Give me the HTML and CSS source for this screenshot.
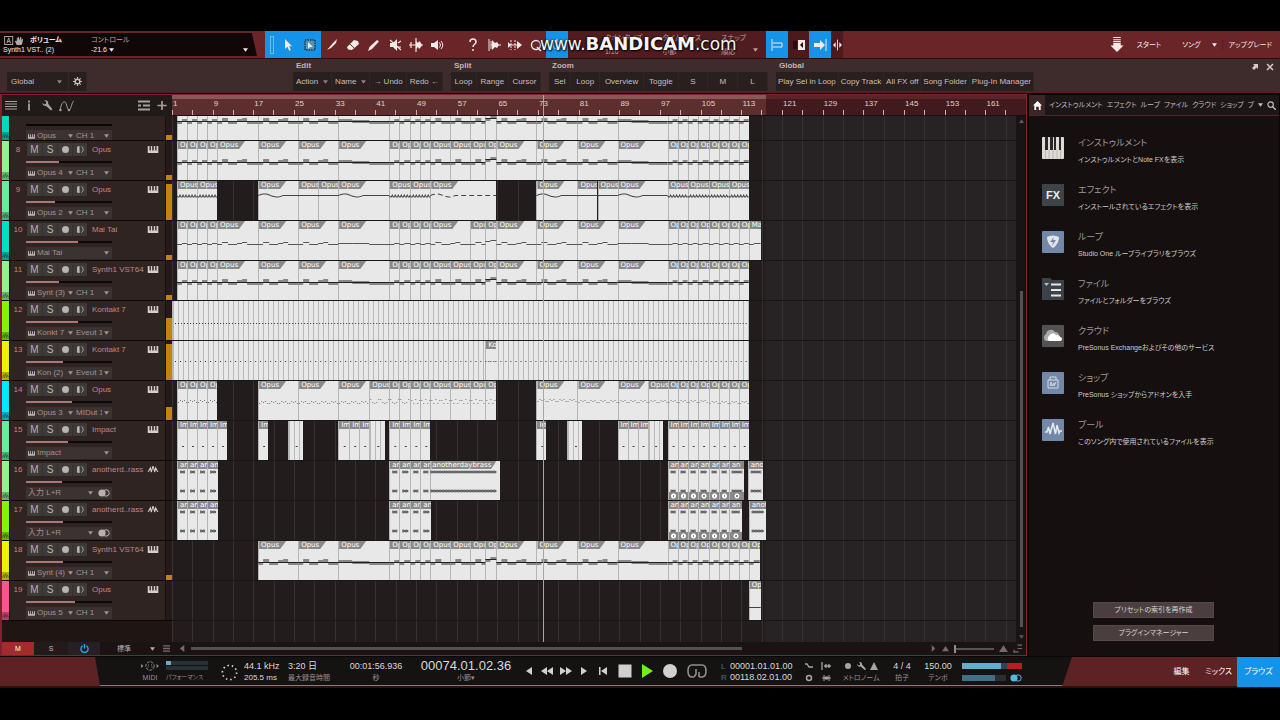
FILE: index.html
```html
<!DOCTYPE html>
<html lang="ja">
<head>
<meta charset="utf-8">
<title>Studio One</title>
<link rel="stylesheet" href="styles.css">
</head>
<body>
<svg class="defs" aria-hidden="true">
  <symbol id="keys" viewBox="0 0 12 8"><path d="M0 0h2v5h1.500V0h1.600v5h1.800V0h1.600v5h1.500V0h2v8H0z"/></symbol>
  <symbol id="wave" viewBox="0 0 12 8"><path d="M0 6h1l2-4 1 5 2-7 2 7 1-5 2 4h1" fill="none" stroke="currentColor" stroke-width="1.2"/></symbol>
  <symbol id="down" viewBox="0 0 6 4"><path d="M0 0h6L3 4z"/></symbol>
  <symbol id="up" viewBox="0 0 8 6"><path d="M0 6h8L4 0z"/></symbol>
  <symbol id="mono" viewBox="0 0 8 8"><path d="M3 0a4 4 0 0 0 0 8z"/><path d="M5 .5a4 4 0 0 1 0 7" fill="none" stroke="currentColor"/></symbol>
  <symbol id="stereo" viewBox="0 0 12 8"><circle cx="4" cy="4" r="3.6"/><circle cx="8" cy="4" r="3.2" fill="none" stroke="currentColor"/></symbol>
  <symbol id="gear" viewBox="0 0 10 10"><circle cx="5" cy="5" r="2.6" fill="none" stroke="currentColor" stroke-width="1.6"/><path d="M5 0v2M5 8v2M0 5h2M8 5h2M1.5 1.5l1.4 1.4M7.1 7.1l1.4 1.4M8.5 1.5L7.100 2.900M1.500 8.500l1.400-1.400" stroke="currentColor" stroke-width="1.300"/></symbol>
  <symbol id="wrench" viewBox="0 0 12 12"><path d="M1 3l2 2 2-1 0-2-2-1.500c3-.8 5 1 4.200 3.500L12 10l-1.500 1.500L5 6.500C3 7.200.8 5.500 1 3z"/></symbol>
</svg>

<header class="topbar">
  <section class="param">
    <svg class="param-a" viewBox="0 0 24 10"><rect x=".5" y=".5" width="9" height="9" fill="none" stroke="currentColor"/><path d="M3 8l2-6 2 6M3.500 6h3" fill="none" stroke="currentColor"/><path d="M14 10l-2-4 1-1 1 1V2h1v3l.5-4h1l.2 4L18 1h1v4l1-2 1 .5-1 5-1 1.500z"/></svg>
    <b>ボリューム</b><span class="param-ctl">コントロール</span>
    <span class="param-name">Synth1 VST.. (2)</span><span class="param-val">-21.6 <svg class="dn"><use href="#down"/></svg></span><svg class="dn param-dn"><use href="#down"/></svg>
  </section>
  <nav class="tools">
    <span class="grip on"></span>
    <button class="on wide" aria-label="Arrow"><svg viewBox="0 0 14 14"><path d="M4 1v10l2.500-2.300 1.700 4 1.600-.7-1.700-3.800H11z"/></svg></button>
    <button class="on wide" aria-label="Range"><svg viewBox="0 0 14 14"><rect x="2" y="2" width="10" height="10" fill="#5592b8" stroke="#19384e" stroke-width="1.500" stroke-dasharray="1.500 1"/><path d="M5 4v7l2-2h3z"/></svg></button>
    <button aria-label="Split"><svg viewBox="0 0 14 14"><path d="M2 12l6-7 4-4-1 4-5 5z"/></svg></button>
    <button aria-label="Eraser"><svg viewBox="0 0 14 14"><path d="M1 9l7-7 4 1 1 3-7 6-4-.5z"/><path d="M4 6l4 4" stroke="#6a2529"/></svg></button>
    <button aria-label="Paint"><svg viewBox="0 0 14 14"><path d="M1 13l1.500-4L10 2l2 1.500L5 11z"/></svg></button>
    <button aria-label="Mute"><svg viewBox="0 0 14 14"><path d="M2 5h3l4-4v12L5 9H2z"/><path d="M2 2l11 10M10 5l3-2M10 9h3" stroke="currentColor" stroke-width="1.200"/></svg></button>
    <button aria-label="Bend"><svg viewBox="0 0 14 14"><path d="M7 0v14M0 7h14M2 4v6" stroke="currentColor" stroke-width="1.200"/><path d="M7 3l2 2 1-2 2 2 1 2-1 2-2 2-1-2-2 2z"/></svg></button>
    <button aria-label="Listen"><svg viewBox="0 0 14 14"><path d="M1 5h3l4-3v10L4 9H1z"/><path d="M9.500 4.500q2 2.500 0 5M11 3q3.500 4 0 8" fill="none" stroke="currentColor"/></svg></button>
    <button class="gap" aria-label="Help"><svg viewBox="0 0 14 14"><path d="M4 4c0-4 6-4 6 0 0 2.500-3 2-3 5" fill="none" stroke="currentColor" stroke-width="1.500"/><circle cx="7" cy="12" r="1"/></svg></button>
    <button aria-label="Strip"><svg viewBox="0 0 14 14"><path d="M2 1v12M4 3v8" stroke="currentColor"/><path d="M4 7h10" stroke="currentColor"/><path d="M5 2l3 3 2-1 2 3-2 3-2-1-3 3z"/></svg></button>
    <button aria-label="Transient"><svg viewBox="0 0 14 14"><path d="M3 2v10M7 2v10" stroke="currentColor" stroke-dasharray="2 1"/><path d="M0 7h12" stroke="currentColor"/><path d="M9 3l5 4-5 4zM0 4l3 3-3 3z"/></svg></button>
    <button aria-label="Quantize"><svg viewBox="0 0 14 14"><circle cx="7" cy="7" r="4.500" fill="none" stroke="currentColor" stroke-width="1.400"/><path d="M8 9l4 4" stroke="currentColor" stroke-width="1.500"/></svg></button>
    <button class="on wide" aria-label="Auto quantize"><svg viewBox="0 0 14 14"><path d="M7 1v12" stroke="currentColor" stroke-dasharray="2 1"/><circle cx="7" cy="7" r="4" fill="none" stroke="currentColor"/></svg></button>
  </nav>
  <section class="grid-opts">
    <span>クオンタイズ<br>1/16</span><span>タイムベース<br>小節</span><span>スナップ<br>順応</span>
    <svg class="dn"><use href="#down"/></svg>
    <strong class="mark"><small>www.</small>BANDICAM<small>.com</small></strong>
  </section>
  <nav class="tools">
    <button class="on wide" aria-label="Snap"><svg viewBox="0 0 14 14"><path d="M2 1v12M3 5h9v4H3" fill="none" stroke="currentColor"/></svg></button>
    <button class="dim" aria-label="Ripple"><svg viewBox="0 0 14 14"><path d="M2 3v8M4 3v8" stroke="#000"/><path d="M6 2h7v10H6z"/><path d="M11 4L8 7l3 3z" fill="#300"/></svg></button>
    <button class="on wide" aria-label="Autoscroll"><svg viewBox="0 0 14 14"><path d="M1 5h6V2l5 5-5 5V9H1z"/><path d="M13 1v12" stroke="currentColor"/></svg></button>
    <button class="thin" aria-label="Cursor"><svg viewBox="0 0 10 14"><path d="M5 1v12" stroke="currentColor"/><path d="M0 7l3-3v6zM10 7L7 4v6z"/></svg></button>
  </nav>
  <nav class="pages">
    <svg class="dl" viewBox="0 0 14 16"><path d="M3 0h8v1H3zM3 2h8v1H3zM3 4h8v1.500H3zM3 6.500h8V9h3l-7 7-7-7h3z"/></svg>
    <button>スタート</button><button>ソング</button><svg class="dn"><use href="#down"/></svg><button>アップグレード</button>
  </nav>
</header>

<section class="macros">
  <div class="group preset"><div class="row">
    <label class="pick"><select aria-label="Macro page"><option>Global</option></select><svg class="dn"><use href="#down"/></svg></label>
    <button aria-label="Settings"><svg class="i9"><use href="#gear"/></svg></button></div></div>
  <div class="group edit"><h2>Edit</h2><div class="row"><button>Action <svg class="dn"><use href="#down"/></svg></button><button>Name <svg class="dn"><use href="#down"/></svg></button><button>→ Undo</button><button>Redo ←</button></div></div>
  <div class="group split"><h2>Split</h2><div class="row"><button>Loop</button><button>Range</button><button>Cursor</button></div></div>
  <div class="group zoom"><h2>Zoom</h2><div class="row"><button>Sel</button><button>Loop</button><button>Overview</button><button>Toggle</button><button>S</button><button>M</button><button>L</button></div></div>
  <div class="group glob"><h2>Global</h2><div class="row"><button>Play Sel in Loop</button><button>Copy Track</button><button>All FX off</button><button>Song Folder</button><button>Plug-In Manager</button></div></div>
  <svg class="close" viewBox="0 0 24 8"><path d="M2 1h5v5L5.500 4.500 3 7 1 5l2.500-2.500z"/><path d="M16 1l6 6M22 1l-6 6" stroke="currentColor" stroke-width="1.500"/></svg>
</section>

<main class="main">
  <section class="arrange">
    <div class="head">
      <div class="head-tools">
        <svg viewBox="0 0 12 10"><path d="M0 1h12M0 3.500h12M0 6h12M0 8.500h12" stroke="currentColor"/></svg>
        <svg viewBox="0 0 12 10"><path d="M6 0v2M6 3v7" stroke="currentColor" stroke-width="1.800"/></svg>
        <svg viewBox="0 0 12 12"><use href="#wrench"/></svg>
        <svg class="curve" viewBox="0 0 16 12"><path d="M1 11C2 4 4 1 6 2s2 8 4 8 3-9 5-9" fill="none" stroke="currentColor"/><circle cx="1.500" cy="10" r="1.200"/><circle cx="10" cy="10" r="1.200"/></svg>
        <i></i>
        <svg viewBox="0 0 12 10"><path d="M0 1h12M0 9h12M0 5h3M5 5h7" stroke="currentColor" stroke-width="1.800"/></svg>
        <svg viewBox="0 0 12 12"><path d="M6 1v10M1 6h10" stroke="currentColor" stroke-width="1.800"/></svg>
      </div>
      <div class="ruler"><div class="loop"></div><div class="bars" id="bars"></div></div>
    </div>
    <div class="body">
      <div class="tracks" id="tracks"></div>
      <div class="lanes" id="lanes"></div>
      <div class="vscroll"><svg class="dn"><use href="#up"/></svg><i></i><svg class="dn"><use href="#down"/></svg></div>
    </div>
    <div class="foot">
      <button class="m">M</button><button class="s">S</button><button class="p" aria-label="Power"><svg class="i9" viewBox="0 0 10 10"><path d="M3 2a4 4 0 1 0 4 0M5 0v5" fill="none" stroke="currentColor" stroke-width="1.500"/></svg></button>
      <label class="pick size"><select aria-label="Track size"><option>標準</option></select><svg class="dn"><use href="#down"/></svg></label>
      <svg class="i7" viewBox="0 0 8 8"><path d="M0 1h8M0 4h8M0 7h8" stroke="currentColor" stroke-width="1.500"/></svg>
      <svg class="i7 left" viewBox="0 0 8 8"><path d="M6 0v8L1 4z"/></svg>
      <div class="hscroll"><i></i></div>
      <svg class="i7" viewBox="0 0 8 8"><path d="M2 0v8l4-4z"/></svg>
      <svg class="i7"><use href="#up"/></svg>
      <input type="range" value="0" aria-label="Zoom">
      <svg class="i9"><use href="#up"/></svg>
      <svg class="i9" viewBox="0 0 8 8"><path d="M4 1h4M4 4h4M1 5v3M1 7h4" stroke="currentColor"/></svg>
    </div>
    <div class="cursor-wrap"><div class="playhead"></div></div>
  </section>

  <aside class="browser">
    <nav class="tabs">
      <button class="home" aria-label="Home"><svg class="i9" viewBox="0 0 10 10"><path d="M5 0l5 5H8.500v5h-2V6.500h-3V10h-2V5H0z"/></svg></button>
      <button>インストゥルメント</button><button>エフェクト</button><button>ループ</button><button>ファイル</button><button>クラウド</button><button>ショップ</button><button>プ</button>
      <svg class="dn"><use href="#down"/></svg><svg class="i9" viewBox="0 0 10 10"><circle cx="4" cy="4" r="3" fill="none" stroke="currentColor" stroke-width="1.300"/><path d="M6 6l4 4" stroke="currentColor" stroke-width="1.500"/></svg>
    </nav>
    <ul class="cats">
      <li><svg viewBox="0 0 22 22"><rect width="22" height="22" rx="1" fill="#dedad6"/><path d="M3 0h3v13H3zM8 0h3v13H8zM12 0h2v13h-2zM17 0h2v13h-2z" fill="#292628"/><path d="M3.500 13v9M7 13v9M11 13v9M15 13v9M18.500 13v9" stroke="#bcb8b5"/></svg><div><h3>インストゥルメント</h3><p>インストゥルメントとNote FXを表示</p></div></li>
      <li><span class="fx">FX</span><div><h3>エフェクト</h3><p>インストールされているエフェクトを表示</p></div></li>
      <li><svg viewBox="0 0 22 22"><rect width="22" height="22" rx="1" fill="#7188a9"/><path d="M5 6q6-3 12 0c0 5-3 9-6 11-3-2-6-6-6-11z" fill="#e2e6ea"/><path d="M12 6l-4 5h3l-1 4 4-6h-3z" fill="#7188a9"/></svg><div><h3>ループ</h3><p>Studio One ループライブラリをブラウズ</p></div></li>
      <li><svg viewBox="0 0 22 22"><path d="M0 0h8l2 2h12v20H0z" fill="#3c4248"/><path d="M2 5h5L4.500 8z" fill="#b3c0c8"/><path d="M9 6.500h10M9 12h10M9 17.500h10" stroke="#e5e8e9" stroke-width="2"/></svg><div><h3>ファイル</h3><p>ファイルとフォルダーをブラウズ</p></div></li>
      <li><svg viewBox="0 0 22 22"><rect width="22" height="22" rx="1" fill="#545253"/><path d="M4 16a4 4 0 0 1 0-7 5 5 0 0 1 9-2 4 4 0 0 1 4 4 3 3 0 0 1 1 5z" fill="#aaa"/><path d="M7 16a3 3 0 0 1 0-5 4 4 0 0 1 7-1 3 3 0 0 1 4 2 2 2 0 0 1 0 4z" fill="#fff"/></svg><div><h3>クラウド</h3><p>PreSonus Exchangeおよびその他のサービス</p></div></li>
      <li><svg viewBox="0 0 22 22"><rect width="22" height="22" rx="1" fill="#7188a9"/><path d="M6 8h10v8H6zM8 8V5h6v3M8 14l1-4 1 4 2-3v3l2-4" fill="none" stroke="#d5dbe3"/></svg><div><h3>ショップ</h3><p>PreSonus ショップからアドオンを入手</p></div></li>
      <li><svg viewBox="0 0 22 22"><rect width="22" height="22" rx="1" fill="#7188a9"/><path d="M3 13h2l1.500-5L8 15l3-11 2.500 11L15 6l2 8 1-2h2" fill="none" stroke="#e6eaee" stroke-width="1.500"/></svg><div><h3>プール</h3><p>このソング内で使用されているファイルを表示</p></div></li>
    </ul>
    <div class="actions"><button>プリセットの索引を再作成</button><button>プラグインマネージャー</button></div>
  </aside>
</main>

<footer class="transport">
  <div class="panel">
    <div class="cell mid"><svg class="midi" viewBox="0 0 18 10"><path d="M0 3l2.500 2L0 7zM15.500 3L18 5l-2.500 2z"/><circle cx="9" cy="5" r="4.200" fill="none" stroke="currentColor" stroke-dasharray="3 1"/><path d="M7 4h1M10 4h1M6.500 6h1M10.500 6h1" stroke="currentColor"/></svg><small>MIDI</small></div>
    <div class="cell perf"><div class="load"></div><div class="load idle"></div><small>パフォーマンス</small></div>
    <div class="cell mid"><svg class="dots" viewBox="0 0 18 18"><circle cx="9" cy="9" r="7.500" fill="none" stroke="currentColor" stroke-width="1.800" stroke-dasharray="1.500 3.200"/></svg></div>
    <div class="cell"><span>44.1 kHz</span><span class="sm">205.5 ms</span></div>
    <div class="cell"><span>3:20 日</span><small>最大録音時間</small></div>
    <div class="cell mid"><span>00:01:56.936</span><small>秒</small></div>
    <div class="cell mid"><span class="pos">00074.01.02.36</span><small>小節▾</small></div>
    <div class="keys">
      <button aria-label="Back"><svg viewBox="0 0 14 14"><path d="M10 3v8L4 7z"/></svg></button>
      <button aria-label="Rewind"><svg viewBox="0 0 14 14"><path d="M7 3v8L1 7zM13 3v8L7 7z"/></svg></button>
      <button aria-label="Forward"><svg viewBox="0 0 14 14"><path d="M1 3v8l6-4zM7 3v8l6-4z"/></svg></button>
      <button aria-label="Next"><svg viewBox="0 0 14 14"><path d="M4 3v8l6-4z"/></svg></button>
      <button aria-label="Return to zero"><svg viewBox="0 0 14 14"><path d="M11 3v8L5 7zM3 3h1.500v8H3z"/></svg></button>
      <button class="big" aria-label="Stop"><svg viewBox="0 0 14 14"><path d="M.5.500h13v13H.5z"/></svg></button>
      <button class="big play" aria-label="Play"><svg viewBox="0 0 14 14"><path d="M2 0v14l11-7z"/></svg></button>
      <button class="big" aria-label="Record"><svg viewBox="0 0 14 14"><circle cx="7" cy="7" r="7"/></svg></button>
      <button class="loopb" aria-label="Loop"><svg viewBox="0 0 22 16"><path d="M8 14H6q-4 0-4-6t4-6h10q4 0 4 6t-4 6h-3M8 14l2-3V6M13 14V9" fill="none" stroke="currentColor" stroke-width="1.600"/></svg></button>
    </div>
    <div class="cell lr"><span><i>L</i>00001.01.01.00</span><span><i>R</i>00118.02.01.00</span></div>
    <div class="cell icons"><svg viewBox="0 0 30 8"><path d="M1 2h2l2 3h4M18 0v8M20 4h7M22 2v4M25 2v4" fill="none" stroke="currentColor" stroke-width="1.300"/></svg><svg viewBox="0 0 30 8"><circle cx="5" cy="4" r="2.500" fill="none" stroke="currentColor" stroke-width="1.500"/><path d="M18 4h9M20 1v6M25 1v6M21 3h3v2h-3z" stroke="currentColor"/></svg></div>
    <div class="cell mid"><svg class="met" viewBox="0 0 34 10"><circle cx="4" cy="5" r="3"/><path d="M13 3l1.500 1.500L16 4l0-1.500L15 1c2-.5 3.500 1 3 2.500L22 8l-1 1.200L16.500 5.500C15 6 13 5 13 3zM30 1l4 8h-8z"/></svg><small>メトロノーム</small></div>
    <div class="cell mid"><span>4 / 4</span><small>拍子</small></div>
    <div class="cell mid"><span>150.00</span><small>テンポ</small></div>
    <div class="cell out"><div class="lvl"></div><div class="lvl two"><i></i><svg class="st"><use href="#stereo"/></svg></div></div>
  </div>
  <nav class="views"><button>編集</button><button>ミックス</button><button class="on">ブラウズ</button></nav>
</footer>
<script src="script.js"></script>
</body>
</html>
```

FILE: styles.css
```css
* { box-sizing: border-box; }
body {
  margin: 0; padding: 31px 0 32px; min-height: 100vh; background: #000; color: #c9bebd;
  display: flex; flex-direction: column; overflow: hidden;
  font: 8px/10px "Liberation Sans", "Noto Sans CJK JP", sans-serif;
  font-feature-settings: "palt";
}
button, select, input { font: inherit; color: inherit; background: none; border: 0; margin: 0; padding: 0; font-feature-settings: inherit; }
button { display: flex; align-items: center; justify-content: center; white-space: nowrap; }
select { appearance: none; min-width: 0; flex: 1; text-overflow: clip; }
svg { fill: currentColor; flex: none; display: block; }
h2, h3, p, ul { margin: 0; padding: 0; font-weight: normal; list-style: none; }
small { font-size: 7px; }
.defs { position: absolute; width: 0; height: 0; }
.dn { width: 5px; height: 4px; }
.i7 { width: 7px; height: 7px; }
.i9 { width: 9px; height: 9px; }
.pick { display: flex; align-items: center; gap: 4px; }

/* Top bar */
.topbar { display: flex; align-items: stretch; height: 28px; background: #6a2529; border-bottom: 1px solid #2b0d0f; color: #f2e9e9; }
.param {
  width: 257px; margin: 2px 8px 2px 0; padding: 2px 8px 2px 3px; background: #120707;
  clip-path: polygon(0 0, 98% 0, 100% 100%, 0 100%);
  display: grid; grid-template-columns: 27px 61px 41px 1fr 6px; align-items: center;
}
.param-a { width: 24px; height: 9px; color: #b5abab; }
.param b { font-weight: bold; font-size: 7px; }
.param-ctl { grid-column: 3 / 6; color: #b3a5a5; font-size: 7px; }
.param-name { grid-column: 1 / 3; font-size: 7px; }
.param-val { display: flex; align-items: center; gap: 2px; font-size: 7px; }
.param-dn { grid-column: 5; }
.tools { display: flex; }
.tools button { width: 21px; }
.tools .wide { width: 22px; }
.tools .thin { width: 12px; background: #4c1a1d; }
.tools .dim { background: #4c1a1d; }
.tools .gap { margin-left: 15px; }
.tools svg { width: 14px; height: 14px; }
.tools .thin svg { width: 9px; }
.on { background: #1493e8; }
.grip { width: 12px; display: flex; align-items: center; padding-left: 5px; }
.grip::before { content: ""; width: 2px; height: 16px; border: 1px solid #6dbdf0; }
.grid-opts { position: relative; width: 198px; background: #501c20; display: flex; gap: 20px; padding: 0 8px 0 37px; color: #bd9d9f; font-size: 7px; line-height: 14px; white-space: nowrap; }
.grid-opts > .dn { position: absolute; right: 8px; bottom: 6px; }
.mark {
  position: absolute; left: -28px; top: 2px; line-height: 22px; white-space: nowrap; color: #f4f4f4;
  font-family: "DejaVu Sans", sans-serif; font-size: 18px; text-shadow: 1px 1px 2px #000, -1px 0 2px #000;
}
.mark small { font-size: 17px; font-weight: normal; }
.pages { margin-left: auto; display: flex; align-items: center; gap: 11px; padding-right: 8px; font-size: 7px; }
.pages .dl { width: 14px; height: 15px; }
.pages .dl + button { margin-left: 2px; }
.pages button + button { margin-left: 10px; }
.pages .dn + button { border-left: 1px solid #541c1f; padding-left: 6px; margin-left: -6px; }

/* Macro toolbar */
.macros { display: flex; align-items: flex-end; gap: 8px; height: 34px; padding: 0 8px 1px 7px; background: #3e2c2c; border-bottom: 1px solid #551c25; }
.group h2 { font-size: 8px; font-weight: bold; line-height: 12px; padding: 0 3px; color: #c2b4b3; }
.row { display: flex; height: 19px; background: #291f1e; }
.row button { flex: 1 1 auto; gap: 5px; border-right: 1px solid #302524; }
.row .dn { color: #91807f; }
.preset { width: 80px; margin-right: 198px; }
.preset .pick { width: 62px; padding: 0 6px 0 4px; border-right: 1px solid #352928; }
.edit { width: 150px; }
.split { width: 90px; }
.zoom { width: 219px; }
.zoom button:nth-child(n+5) { flex-basis: 20px; }
.glob { width: 258px; }
.close { width: 24px; height: 8px; margin: 0 -3px 20px auto; color: #d7caca; }

/* Arranger */
.main { flex: 1; min-height: 0; display: flex; background: #0b0606; padding: 1px 1px 1px 0; }
.arrange { position: relative; flex: 1; min-width: 0; display: flex; flex-direction: column; border: 1px solid #82202f; border-left-width: 2px; margin-right: 2px; background: #191413; }
.head { display: flex; height: 21px; }
.head-tools { width: 170px; background: #201a19; display: flex; align-items: center; gap: 6px; padding: 0 4px 0 3px; color: #a9a09e; }
.head-tools svg { width: 12px; height: 11px; }
.head-tools .curve { width: 16px; height: 12px; }
.head-tools i { flex: 1; }
.ruler { flex: 1; min-width: 0; background: #451c1e; }
.loop { height: 4px; background: linear-gradient(90deg, #8a5757 69.5%, #592327 0); }
.bars { height: 17px; display: flex; background: linear-gradient(90deg, #5c2f2e 69.5%, #401a1c 0); border-bottom: 1px solid #1d0d0e; }
.bars span { flex: 1 1 0; min-width: 0; padding-left: 1px; color: #e2cfce; background: linear-gradient(#d9aaa6, #d9aaa6) 0 100% / 1px 5px no-repeat, linear-gradient(#d9aaa6, #d9aaa6) 50% 100% / 1px 5px no-repeat; }
.body { flex: 1; min-height: 0; display: flex; overflow: hidden; }
.tracks { width: 170px; overflow: hidden; background: #1f1614; }
.track { height: 40px; display: grid; grid-template-columns: 8px 16px 1fr 7px; background: #302423; border-bottom: 1px solid #0d0808; }
.track.partial { height: 25px; align-content: end; overflow: hidden; }
.track.partial > * { height: 24px; }
.track.partial .ctl { padding-top: 4px; }
.strip { border-right: 1px solid #120b0b; display: flex; align-items: flex-end; }
.strip i { width: 100%; height: 8px; background: #0004; }
.strip svg { width: 7px; height: 8px; color: #0006; }
.num { padding-top: 4px; text-align: center; color: #c18489; }
.ctl { padding-top: 1px; min-width: 0; }
.line { display: flex; align-items: center; padding-right: 6px; }
.msr { display: grid; grid-template-columns: repeat(4, 1fr); width: 62px; flex: none; height: 15px; background: #3e3a38; border: 1px solid #2a2322; color: #b7b3b0; font-size: 10px; }
.msr button + button { border-left: 1px solid #373230; }
.msr svg { width: 7px; height: 7px; }
.name { flex: 1; display: flex; align-items: center; justify-content: space-between; padding-left: 4px; white-space: nowrap; color: #c18489; }
.name svg { width: 12px; height: 7px; color: #d5cfcc; }
.fader { width: 86px; height: 2px; margin: 4px 0; background: #0b0706; }
.fader i { display: block; height: 2px; background: #a8777c; }
.io { width: 86px; display: flex; height: 12px; background: #3b3331; color: #ab8f8d; }
.io .pick { flex: 1 1 0; min-width: 0; gap: 2px; padding: 0 3px 0 2px; }
.io .pick:first-child:not(.wide) { flex: 0 0 48px; padding-right: 1px; }
.io .keysm { width: 7px; height: 5px; color: #bbb0ae; }
.io .st { width: 12px; height: 8px; margin: 2px; color: #bbb0ae; }
.meter { background: #251a19; border-left: 1px solid #150e0d; display: flex; align-items: flex-end; }
.meter i { width: 100%; background: #c7820e; }
.lanes { position: relative; flex: 1; min-width: 0; overflow: hidden; background: repeating-linear-gradient(90deg, #363132 0 1px, transparent 1px 2.409%), linear-gradient(90deg, #221c1d 70.300%, #272324 0); }
.lane { position: relative; height: 40px; border-bottom: 1px solid #191516; }
.lane:first-child { height: 25px; }
.lane:first-child .notes { top: -16px; }
.clip { position: absolute; top: 0; bottom: 0; background: #e8e8e8; border-left: 1px solid #b5b5b5; overflow: hidden; }
.clip h4 { margin: 0; height: 8px; padding-left: 2px; overflow: hidden; font: 7px/8px "DejaVu Sans", sans-serif; color: #fff; background: #898989; white-space: nowrap; }
.clip.cut h4 { width: 27px; clip-path: polygon(0 0, 100% 0, 78% 100%, 0 100%); }
.clip.cut.long h4 { width: 65px; padding-left: 1px; clip-path: polygon(0 0, 100% 0, 92% 100%, 0 100%); }
.clip.dense { background: repeating-linear-gradient(90deg, #b9b9b9 0 1px, #e8e8e8 1px 5px); }
.clip.looped::after { content: ""; position: absolute; left: 0; right: 0; bottom: 0; height: 8px; background: radial-gradient(circle at 50% 50%, #898989 1px, #fff 1px 2px, #898989 3px); }
.notes { position: absolute; inset: 0; width: 100%; height: 39px; }
.vscroll { width: 10px; display: flex; flex-direction: column; align-items: center; padding: 3px 0; color: #605856; }
.vscroll i { width: 3px; flex: 1; margin: 168px 0 8px; background: #57504e; }
.foot { display: flex; align-items: center; height: 13px; color: #756c6a; gap: 5px; padding-right: 4px; font-size: 7px; }
.foot button { align-self: stretch; width: 32px; margin-right: -5px; background: #211c1b; color: #c4bbb9; }
.foot .m { background: #a32b2e; color: #fff; }
.foot .s { width: 34px; }
.foot .p { background: #242024; color: #2f9fe6; }
.size { width: 38px; margin: 0 3px 0 17px; color: #b7acab; }
.foot .left { margin-left: 4px; }
.hscroll { flex: 1; height: 3px; }
.hscroll i { display: block; height: 3px; width: 75%; background: #57504e; }
.foot input { width: 40px; height: 9px; appearance: none; background: linear-gradient(#5c5452, #5c5452) 0 50% / 100% 2px no-repeat; }
.foot input::-webkit-slider-thumb { appearance: none; width: 2px; height: 8px; background: #958b88; }
.cursor-wrap { position: absolute; inset: 0 10px 13px 170px; pointer-events: none; }
.playhead { position: absolute; top: 0; bottom: 0; left: 43.900%; width: 1px; background: #a6a6a6; }

/* Browser */
.browser { width: 250px; display: flex; flex-direction: column; background: #15100f; margin-top: 1px; }
.tabs { display: flex; align-items: center; justify-content: space-between; height: 21px; padding-right: 3px; border-bottom: 1px solid #4b2529; background: #1d1617; color: #c5bcbb; font-size: 7px; }
.tabs .home { width: 16px; height: 20px; background: #3b2526; color: #fff; }
.cats { padding: 21px 13px; display: grid; gap: 25px; flex: 1; align-content: start; }
.cats li { display: flex; gap: 14px; height: 22px; }
.cats svg, .fx { width: 22px; height: 22px; flex: none; }
.fx { background: #3d4347; color: #eee; font: bold 11px/22px "Liberation Sans", sans-serif; text-align: center; }
.cats li > div { margin-top: -2px; white-space: nowrap; }
.cats h3 { font-size: 9px; line-height: 16px; color: #a09897; }
.cats p { font-size: 7px; line-height: 17px; color: #d2cac9; }
.actions { display: grid; gap: 7px; padding: 0 65px 15px 64px; }
.actions button { height: 16px; background: #4a3e3e; border: 1px solid #574848; color: #ded4d3; font-size: 7px; }

/* Transport */
.transport { display: flex; height: 31px; background: #5c2224; border-bottom: 2px solid #2c0f11; }
.panel {
  flex: 1; margin-left: 95px; margin-right: 91px; padding: 3px 0 0 41px; background: #141312; border-bottom: 1px solid #8b7c7b;
  clip-path: polygon(0 0, 100% 0, 99% 100%, 5px 100%);
  display: grid; grid-template-columns: 28px 50px 30px 44px 52px 72px 108px 192px 84px 44px 42px 40px 32px 1fr; font-size: 9px; color: #dcdad8;
}
.cell { display: flex; flex-direction: column; white-space: nowrap; gap: 2px; padding-top: 1px; }
.cell small { color: #96908f; }
.cell .sm { font-size: 8px; }
.mid { align-items: center; }
.midi { width: 18px; height: 10px; color: #8c8887; }
.dots { width: 17px; height: 17px; margin-top: 3px; }
.perf { padding: 1px 6px 0 2px; gap: 1px; }
.load { height: 4px; background: linear-gradient(90deg, #68abce 12%, #283136 0); }
.load.idle { background: #283136; }
.perf small { padding-top: 1px; font-size: 6px; }
.pos { font-size: 13px; }
.keys { display: flex; align-items: center; justify-content: space-between; padding: 0 4px 3px 2px; color: #d0d0d0; }
.keys svg { width: 14px; height: 14px; }
.keys .big { margin-left: 4px; }
.play { color: #6fee20; }
.keys .loopb { margin-left: 5px; color: #8f8f8f; }
.keys .loopb svg { width: 22px; height: 16px; }
.lr { padding: 1px 0 0 9px; gap: 0; }
.lr i { display: inline-block; width: 9px; font-style: normal; color: #4e7189; font-size: 8px; }
.icons { padding-top: 2px; padding-left: 8px; gap: 4px; color: #a5a5a5; }
.icons svg { width: 30px; height: 8px; }
.met { width: 34px; height: 10px; color: #a5a5a5; }
.out { padding: 3px 0 0 8px; gap: 6px; }
.lvl { width: 60px; height: 6px; background: linear-gradient(90deg, #68abce 65%, #274754 65% 75%, #bb1c23 75%); }
.two { background: none; display: flex; gap: 4px; align-items: center; }
.two i { width: 44px; height: 6px; background: linear-gradient(90deg, #416f88 75%, #292f31 0); }
.two .st { width: 12px; height: 8px; color: #5bb5e5; }
.views { display: flex; font-size: 8px; color: #fff; }
.views button { width: 37px; }
.views .on { width: 43px; margin-bottom: -1px; }
```

FILE: script.js
```js
const LEFT = 172, SPAN = 843;
const icon = (id, cls = "") => `<svg class="${cls}"><use href="#${id}"/></svg>`;
const pct = n => (n / SPAN * 100).toFixed(3) + "%";

document.getElementById("bars").innerHTML =
  Array.from({ length: 21 }, (_, i) => `<span>${1 + i * 8}</span>`).join("");

// number, name, colour, fader %, input, channel, meter px
const tracks = [
  [7, "Opus", "#00d8c4", 40, "Opus", "CH 1", 5],
  [8, "Opus", "#93f28d", 38, "Opus 4", "CH 1", 5],
  [9, "Opus", "#64eda0", 34, "Opus 2", "CH 1", 36],
  [10, "Mai Tai", "#00dccb", 60, "Mai Tai", "", 5],
  [11, "Synth1 VST64", "#93f28d", 38, "Synt (3)", "CH 1", 5],
  [12, "Kontakt 7", "#86f20b", 61, "Konkt 7", "Eveut 1", 22],
  [13, "Kontakt 7", "#e7f500", 43, "Kon (2)", "Eveut 1", 36],
  [14, "Opus", "#00e9f5", 53, "Opus 3", "MIDut 1", 13],
  [15, "Impact", "#64eda0", 49, "Impact", "", 0],
  [16, "anotherd..rass", "#93f28d", 42, "入力 L+R", null, 0],
  [17, "anotherd..rass", "#86f20b", 43, "入力 L+R", null, 0],
  [18, "Synth1 VST64", "#e7f500", 43, "Synt (4)", "CH 1", 5],
  [19, "Opus", "#fa5590", 57, "Opus 5", "CH 1", 0]
];
const pick = (label, text, lead, cls = "") => `<label class="pick ${cls}">${lead ? icon("keys", "keysm") : ""}<select aria-label="${label}"><option>${text}</option></select>${icon("down", "dn")}</label>`;
// The first row is scrolled so that only its lower part shows
document.getElementById("tracks").innerHTML = tracks.map(([n, name, color, vol, input, ch, lvl], i) => `
  <div class="track ${i ? "" : "partial"}">
    <div class="strip" style="background:${color}"><i>${icon("wave")}</i></div>
    <div class="num">${i ? n : ""}</div>
    <div class="ctl">
      ${i ? `<div class="line">
        <div class="msr"><button>M</button><button>S</button><button aria-label="Record"><svg viewBox="0 0 8 8"><circle cx="4" cy="4" r="4"/></svg></button><button aria-label="Monitor">${icon("mono")}</button></div>
        <div class="name"><span>${name}</span>${icon(ch === null ? "wave" : "keys")}</div>
      </div>` : ""}
      <div class="fader"><i style="width:${i ? vol : 0}%"></i></div>
      <div class="io">${ch === null ? pick("Input", input, false, "wide") + icon("stereo", "st") : pick("Instrument", input, true, ch ? "" : "wide") + (ch ? pick("Channel", ch, false) : "")}</div>
    </div>
    <div class="meter"><i style="height:${lvl}px"></i></div>
  </div>`).join("");

// Each clip: [start, end, label, extra class]
const run = (starts, end, label, cls) => starts.map((s, i) => [s, starts[i + 1] ?? end, label, cls]);
const intro = [177, 187, 197, 207], mid4 = [389, 399, 410, 420];
const outro = [667, 677, 687, 697, 708, 718, 728, 738];
const song = [...intro, 217, 258, 298, 338, ...mid4, 430, 450, 470, 485, 496, 536, 577, 617, ...outro];
const full = run(song, 748, "Opus");
const clips = [
  run(song, 748, ""), full,
  [...run([177, 197], 217, "Opus"), ...run([258, 298, 318, 338, 389, 410, 430], 496, "Opus").filter(c => c[0] !== 338), [338, 389, "Opus"], ...run([536, 577, 597, 617, 667, 687, 708, 728], 748, "Opus")],
  [...run(song.filter(s => s !== 450), 748, "Opus"), [748, 760, "Mai"]],
  full,
  [[172, 748, "", "dense"]],
  [[172, 748, "", "dense"], [485, 496, "Ko"]],
  [...run(intro, 217, "Opus"), ...run([258, 298, 338, 369, ...mid4, 430, 450, 470, 485], 496, "Opus"), ...run([536, 577, 617, 647, ...outro], 748, "Opus")],
  [...run([...intro, 217], 227, "Im"), [258, 268, "Im"], [288, 303, "", "dense"], ...run([338, 349, 359], 369, "Im"), [369, 385, "", "dense"], ...run(mid4, 430, "Im"), [536, 546, "Im"], [567, 582, "", "dense"], ...run([617, 627, 637], 647, "Im"), [647, 662, "", "dense"], ...run(outro, 748, "Im")],
  [...run(intro, 218, "an"), ...run(mid4, 430, "an"), [430, 500, "anotherdaybrass", "long"], ...run(outro.slice(0, 7), 743, "an", "looped"), [747, 762, "anot"]],
  [...run(intro, 218, "an"), ...run(mid4, 431, "an"), ...run(outro.slice(0, 7), 741, "an", "looped"), [748, 765, "anot"]],
  [...run(song.slice(5), 748, "Opus"), [748, 759, "Opus"]],
  [[748, 760, "Opus"]]
];

// Melody steps inside a clip: [from, to, vertical shift]
const step = w => w <= 12 ? [[0, 5, 1], [5, w, -1]]
  : w >= 45 ? [[0, 14, -1], [14, 31, 0], [31, w, 1]]
  : [[0, 5, 1], [5, 11, -2], [11, 20, 1], [20, 25, -1], [25, 30, -2], [30, w, 1]].filter(s => s[0] < w).map(s => [s[0], Math.min(s[1], w), s[2]]);
const rect = (x, y, w, h, c) => `<rect x="${x}" y="${y}" width="${w}" height="${h}" fill="${c}"/>`;

function notes(row, list) {
  let out = "";
  for (const [s, e] of list) {
    const x = s - LEFT, w = e - s;
    if ([0, 1, 4, 11].includes(row)) {
      const y = s === 485 ? 18 : 21;
      for (const [a, b, d] of step(w)) out += rect(x + a, y + d - 1, b - a, 3, "#888");
      out += rect(x, y, w, 1, "#222");
    } else if (row === 3) {
      for (const [a, b, d] of step(w)) out += rect(x + a, (s === 485 ? 19 : 22) + (d > 0 ? 1 : 0) + (d < -1 ? -1 : 0), b - a, 1, "#555");
    } else if (row === 2) {
      let d = `M${x} 15`;
      const zig = s < 217 || (s >= 389 && s < 430) || s >= 667;
      for (let i = 1; i <= w; i++) d += zig ? `L${x + i} ${i % 3 ? 16 : 14}` : `L${x + i} ${(14.5 + Math.sin(i / 4) * (w > 30 && i < 26 ? -1.5 : 0)).toFixed(1)}`;
      out += `<path d="${d}" fill="none" stroke="#444" stroke-width="1" ${s === 430 ? 'stroke-dasharray="5 3"' : ""}/>`;
    } else if (row === 5 || row === 6) {
      for (let i = 3; i < w; i += row === 5 ? 3 : 5) out += rect(x + i, row === 5 ? 22 : 20, 1, 1, "#333");
    } else if (row === 7) {
      for (let i = 1; i < w; i += 2) out += rect(x + i, 18 + (i * i + s) % 5, 1, 1, "#777");
    } else if (row === 8) {
      out += rect(x + w / 2, 25, 2, 1, "#444");
    } else if (row === 9 || row === 10) {
      const long = w > 20, from = long ? 0 : 3, to = long ? 66 : w - 2;
      for (const y of [9, 28]) {
        out += rect(x + from, y + 1, to - from, 2, "#555");
        for (let i = from; i < to; i += 3) out += rect(x + i, y, 2, 4, "#8888");
      }
    } else out += rect(x, 26, w, 1, "#444");
  }
  return out;
}

document.getElementById("lanes").innerHTML = clips.map((list, row) => `
  <div class="lane">${list.map(([s, e, label, cls = ""]) => {
    const cut = label && (cls === "long" || (label === "Opus" && e - s > 25));
    return `<div class="clip ${cls} ${cut ? "cut" : ""}" style="left:${pct(s - LEFT)};width:${pct(e - s)}">${label ? `<h4>${label}</h4>` : ""}</div>`;
  }).join("")}<svg class="notes" viewBox="0 0 ${SPAN} 39" preserveAspectRatio="none">${notes(row, list)}</svg></div>`).join("");
```
